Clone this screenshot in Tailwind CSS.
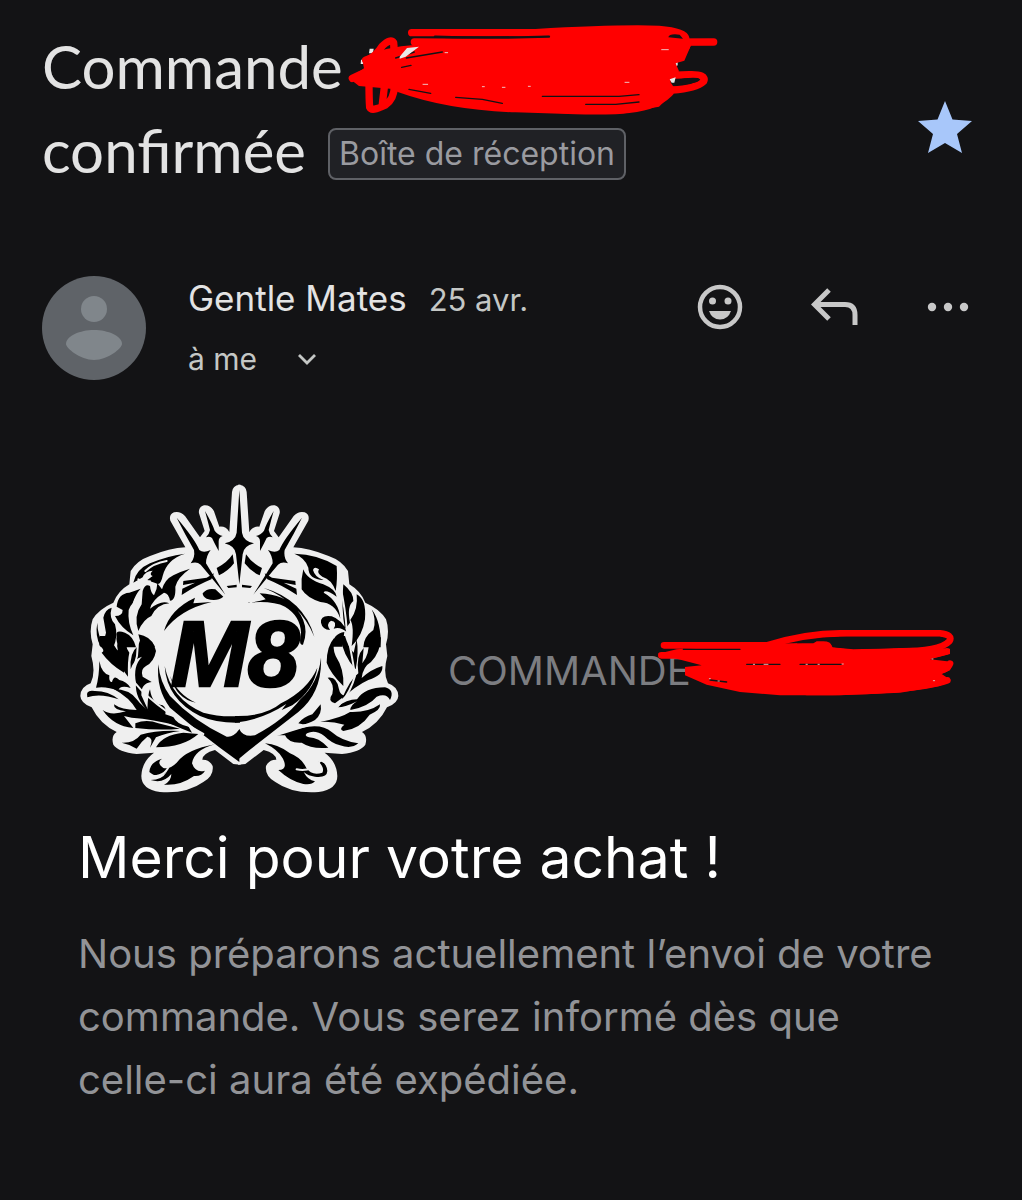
<!DOCTYPE html>
<html lang="fr">
<head>
    <meta charset="UTF-8">
    <meta name="viewport" content="width=device-width, initial-scale=1.0">
    <title>Commande confirmée</title>
    <script src="https://cdn.jsdelivr.net/npm/@tailwindcss/browser@4"></script>
</head>
<body class="min-h-screen bg-[#131315] font-['Inter',sans-serif] text-[#e3e3e3]">
    <!-- Objet du mail -->
    <header class="flex items-center justify-between pl-[42px] pr-[50px] pt-6">
        <h1 class="font-['Lato',sans-serif] text-[60px] leading-[84px]">
            <span class="relative block w-fit">Commande
                <svg class="absolute -top-0.5 left-full ml-1 h-[94px] w-[372px] max-w-none" viewBox="54 36 1116 282" fill="none" stroke="#ff0000" stroke-width="22" stroke-linecap="round" stroke-linejoin="round" aria-hidden="true">
                    <path fill="#e8e8e8" stroke="none" d="M122 116h12l-2 14h-12zM96 150l8-4v16h-9zM1028 154l18-4v16l-8 6z"/>
                    <path fill="#ff0000" stroke="none" d="M60 205L105 175L100 150L180 128L265 106L340 88L500 84L680 74L860 48H990L1076 75L1086 106L1066 152L1040 160L1050 184L1024 216L1040 240L990 290L860 312H740L540 300L380 285L240 246L200 238L90 228Z"/>
                    <path d="M248 68H620Q860 54 990 58Q1066 64 1070 84Q1070 100 1040 92M256 96L520 98L1154 96M1076 100Q1060 150 980 150"/>
                    <path d="M112 152Q140 140 160 108Q184 84 194 98Q200 140 170 170L120 215Q120 270 122 292Q128 306 168 286Q196 268 196 228M160 282L168 215"/>
                    <path d="M70 205Q180 150 330 150M110 150Q180 120 256 116M210 236Q360 290 560 296L740 302Q860 304 900 298Q990 290 1030 240Q1100 236 1124 214Q1134 192 1080 194L1020 196"/>
                    <path stroke="#131315" stroke-width="7" d="M318 80Q470 86 660 80"/>
                    <path stroke="#131315" stroke-width="4" d="M256 126L200 144M232 144L340 126M218 172L246 166M240 238L305 250M380 262L460 268L520 280M640 259H870L930 254M770 283H860L930 276"/>
                    <path fill="#131315" stroke="none" d="M1044 210Q1070 202 1106 204Q1120 208 1104 216Q1074 226 1044 224ZM1018 82Q1020 70 1052 74L1062 86Z"/>
                    <path fill="#e8e8e8" stroke="none" d="M212 140l22-26 36-4-40 30-18 6zM1022 208l18-6-4 16h-8z"/>
                    <path stroke="#f0c0c0" stroke-width="3" d="M348 128h8M282 223h14M460 230h6M520 232h8M598 229h6M888 217h12M998 119h20"/>
                </svg>
            </span>
            <span class="inline-flex items-center gap-[22px]">confirmée
                <button type="button" class="mt-2 rounded-[8px] border-2 border-[#5f6166] bg-[#202125] px-[9px] font-['Inter',sans-serif] text-[32px] leading-[48px] text-[#9a9ba0]">Boîte de réception</button>
            </span>
        </h1>
        <button type="button" class="mt-10" aria-label="Suivi">
            <svg class="h-[54px] w-[54px]" viewBox="0 0 54 54" fill="#a8c7fa" aria-hidden="true">
                <path d="M27 0L34.500 18.500L54 20L39 33L44 52L27 42L10 52L15 33L0 20L19.500 18.500Z"/>
            </svg>
        </button>
    </header>

    <!-- Expéditeur -->
    <section class="flex items-start pl-[42px] pr-[53px] pt-[84px]">
        <svg class="h-[104px] w-[104px] shrink-0" viewBox="0 0 104 104" aria-hidden="true">
            <circle cx="52" cy="52" r="52" fill="#5f6368"/>
            <circle cx="52" cy="33" r="13" fill="#80868b"/>
            <path fill="#80868b" d="M52 54C66 54 80 60 80 68C80 72 66 84 52 84S24 72 24 68C24 60 38 54 52 54Z"/>
        </svg>
        <div class="ml-[42px] flex-1">
            <p class="flex items-baseline gap-[22px] text-[35px] leading-[44px]">Gentle Mates <time class="text-[31px] text-[#c4c7c5]">25 avr.</time></p>
            <button type="button" class="mt-[15px] flex items-center gap-10 text-[30px] leading-[44px] text-[#c4c7c5]">à me
                <svg class="h-5 w-5" viewBox="0 0 20 20" fill="none" stroke="currentColor" stroke-width="2.800" aria-hidden="true"><path d="M2 6L10 14L18 6"/></svg>
            </button>
        </div>
        <div class="flex items-center gap-[68px] pt-2 text-[#c8c8c8]">
            <button type="button" aria-label="Réagir">
                <svg class="h-[46px] w-[46px]" viewBox="0 0 46 46" fill="currentColor" aria-hidden="true">
                    <circle cx="23" cy="23" r="20" fill="none" stroke="currentColor" stroke-width="4.500"/>
                    <circle cx="15.500" cy="17" r="3.500"/><circle cx="31" cy="17" r="3.500"/>
                    <path d="M12 27H34Q31 35.500 23 35.500T12 27Z"/>
                </svg>
            </button>
            <button type="button" aria-label="Répondre">
                <svg class="h-[46px] w-[48px]" viewBox="0 0 48 46" fill="none" stroke="currentColor" stroke-width="5" aria-hidden="true">
                    <path d="M18 6L3.500 20.500L18 35M4 20.500H34Q44 20.500 44 31V41"/>
                </svg>
            </button>
            <button type="button" aria-label="Plus d'options">
                <svg class="h-[46px] w-[42px]" viewBox="0 0 42 46" fill="currentColor" aria-hidden="true">
                    <circle cx="5" cy="23" r="4.200"/><circle cx="21" cy="23" r="4.200"/><circle cx="37" cy="23" r="4.200"/>
                </svg>
            </button>
        </div>
    </section>

    <!-- Contenu -->
    <main class="px-[78px] pt-[100px]">
        <div class="flex items-center gap-12">
            <svg class="h-[316px] w-[322px] shrink-0" viewBox="24 15 966 948" role="img" aria-label="Gentle Mates M8">
                <defs>
                    <path id="half" d="M512 26H508Q488 28 486 48L478 168Q468 150 448 152L432 106Q422 86 402 88Q384 94 387 112L404 165L390 184L345 120Q330 104 312 109Q296 116 301 134L346 214Q300 216 240 240Q200 254 182 285L178 325Q144 345 130 380Q85 400 68 430Q56 465 68 505L64 540Q78 590 62 622Q32 632 31 660Q32 682 65 694Q90 745 140 768Q122 780 130 806Q145 828 200 834L252 830Q216 856 214 900Q214 940 270 948Q350 954 400 918Q432 900 428 870Q418 850 397 851Q398 832 435 822L490 864L512 866Z"/>
                    <g id="stars">
                        <path d="M320 125Q375 190 388 222Q400 232 422 222Q408 240 408 262Q440 315 466 356Q425 305 392 266Q380 255 362 262Q376 245 372 222Q345 175 320 125Z"/>
                        <path d="M405 105Q428 145 434 164Q442 176 458 180Q446 184 446 196L446 225Q435 205 426 186Q418 180 408 184Q418 174 420 162Q412 130 405 105Z"/>
                        <path d="M440 276Q472 260 488 235L492 262Q475 285 447 298ZM340 315L410 305L432 292L424 310Q380 328 335 357L337 338L375 320L339 327ZM470 330L500 326V334L475 336Z"/>
                    </g>
                </defs>
                <g fill="#efefef">
                    <use href="#half"/>
                    <use href="#half" transform="translate(1016 0) scale(-1 1)"/>
                </g>
                <g fill="#000000">
                    <use href="#stars"/>
                    <use href="#stars" transform="translate(1016 0) scale(-1 1)"/>
                    <path d="M508 42L516 170Q520 195 552 202Q520 210 518 235L508 325L498 235Q496 210 464 202Q496 195 500 170Z"/>
                    <!-- laurier, haut gauche -->
                    <path d="M398 352Q412 335 436 340L460 362Q440 378 410 368Q398 362 398 352ZM282 465Q300 400 375 365L370 382L425 378Q330 400 282 465Z"/>
                    <path d="M190 320Q198 280 240 262Q290 240 345 233Q290 250 278 300Q272 330 258 322Q245 318 232 312L248 300Q236 296 248 284Q226 284 218 304Z"/>
                    <path d="M218 345Q225 322 240 330Q242 350 252 358Q262 340 262 322Q270 332 276 340Q285 310 310 298Q335 285 360 278Q322 305 316 332Q318 372 300 374Q296 352 282 350Q246 372 240 398Q275 370 298 382Q262 384 244 420Q220 430 205 465Q190 420 215 385Z"/>
                    <path d="M140 392Q144 352 178 350L212 338Q196 355 188 382Q180 390 176 402Q172 440 190 478Q152 455 135 420Q158 420 158 402Z"/>
                    <path d="M100 425Q105 400 125 395Q116 425 135 445Q145 480 130 514H108Q98 500 108 470ZM82 440Q82 480 105 512H92Q74 480 82 440ZM140 480Q135 460 165 470Q190 480 198 514H152Q136 500 140 480ZM205 475Q240 480 255 512H215Z"/>
                    <!-- laurier, bas gauche -->
                    <g transform="translate(0 480)">
                        <path d="M90 0H126Q126 30 150 50Q165 70 162 110Q120 85 95 50Q108 45 88 28ZM148 0H172Q162 30 178 50Q172 75 174 122Q150 95 150 60Q134 30 148 0Z"/>
                        <path d="M215 0Q254 15 258 45Q252 78 228 90Q210 100 218 122L245 138Q212 142 214 178L236 226Q194 188 198 140Q188 90 216 62Q192 68 182 100Q178 50 204 30Z"/>
                        <path d="M88 75Q95 112 118 118Q116 140 126 138Q132 114 148 132Q170 136 182 156Q148 146 145 165Q110 150 78 155Q88 120 88 75ZM52 184Q45 160 75 165Q115 165 146 190Q90 170 52 184Z"/>
                        <path d="M130 158Q180 160 200 190Q230 230 318 268Q250 250 185 245L162 240L190 276Q130 270 98 222Q122 240 168 226Q130 222 132 205Q155 222 200 222Q180 185 130 158Z"/>
                        <path d="M196 262Q230 248 265 262L330 278Q270 284 196 276ZM155 320Q192 322 212 296Q260 282 330 285Q290 290 258 304L240 335Q252 304 232 302Q212 318 200 338Q180 325 155 320ZM258 334Q278 296 340 290L385 294Q340 334 258 334Z"/>
                        <path d="M232 222Q234 170 240 160Q246 205 278 208Q290 215 286 235L310 243Q320 265 356 272L366 290Q260 250 232 222Z"/>
                        <path d="M265 85Q258 160 300 215Q400 300 500 372L508 378V280Q490 305 470 302Q370 255 300 180Q270 140 265 85ZM284 90Q304 190 400 230Q450 244 510 240V260Q440 262 390 240Q290 190 284 90ZM300 120Q325 178 378 200Q320 190 300 120Z"/>
                        <path d="M276 368Q258 380 280 396Q300 400 320 380Q350 340 435 325Q372 342 366 382Q376 412 405 404Q395 422 372 420Q330 450 282 446Q304 436 304 414Q280 444 242 432Q276 432 290 408Q262 430 238 408Q240 378 276 368Z"/>
                    </g>
                    <!-- laurier, haut droite -->
                    <g transform="translate(495 0)">
                        <path d="M30 381Q70 378 92 370L74 352Q150 355 185 400Q226 450 204 506Q190 510 198 470Q196 420 150 392Q110 372 30 381ZM85 335Q206 370 238 482Q195 378 85 335Z"/>
                        <path d="M178 233Q250 235 305 270Q308 310 302 345Q290 310 262 302Q244 292 252 280Q238 270 234 282Q240 305 266 312Q220 310 220 275Q210 245 178 233ZM205 280Q215 310 265 325Q302 340 305 362Q270 338 266 350Q312 375 316 428Q300 380 256 378Q215 365 200 340Q197 310 205 280Z"/>
                        <path d="M325 325Q356 350 355 375Q335 390 345 440L330 460Q318 400 325 325ZM365 355Q395 370 390 430Q382 480 350 510Q358 450 346 432Q370 400 365 355ZM258 440Q256 416 290 421Q320 430 338 470Q316 450 296 458Q308 436 288 434Q272 444 285 462Q262 460 258 440ZM410 400Q440 440 437 514H385Q386 482 415 462Q425 430 410 400ZM290 512Q295 472 328 468L322 512Z"/>
                    </g>
                    <!-- laurier, bas droite -->
                    <g transform="translate(495 480)">
                        <path d="M258 65Q262 170 190 228Q110 290 40 345L12 368V278Q25 305 60 298Q150 250 196 190Q250 140 258 65ZM0 240Q90 242 138 202Q220 160 247 95Q238 160 172 208L140 222L154 204Q80 252 0 260Z"/>
                        <path d="M298 5Q292 40 302 60Q328 100 325 150Q285 110 275 80Q275 30 298 5ZM316 0H330Q340 35 356 50L365 10Q372 50 362 100Q324 60 316 0Z"/>
                        <path d="M402 10L438 4Q436 50 408 78Q384 92 380 126Q408 100 442 90Q446 118 400 132Q360 150 320 190Q346 130 370 112Q362 60 386 36L382 82Q404 56 402 10ZM278 125Q306 120 312 160Q316 180 332 178L300 202Q276 195 292 174Q300 145 278 125Z"/>
                        <path d="M305 214Q335 190 366 190Q390 154 450 154Q480 162 465 192Q455 170 425 182Q400 212 346 222Q346 208 366 196Q330 215 305 214ZM255 258Q320 245 345 228Q400 230 435 205Q438 222 404 236Q376 278 325 285Q310 280 328 266Q290 255 255 258ZM257 205Q262 235 240 252Q210 270 190 262Q206 242 232 235Z"/>
                        <path d="M120 298Q160 285 200 276Q260 262 290 288Q320 315 370 322Q350 340 315 328Q290 322 268 300Q240 280 216 292Q206 300 222 304Q250 304 280 335Q230 340 200 320Q160 322 150 298Z"/>
                        <path d="M90 322Q130 325 165 352Q200 366 214 396Q230 420 262 410Q270 396 250 376Q274 376 277 405Q276 426 240 422Q220 420 206 408Q218 432 240 436Q230 448 205 444Q165 435 130 402Q160 402 144 368Q130 342 90 322Z"/>
                    </g>
                </g>
                <g fill="none" stroke="#efefef" stroke-width="6" stroke-linecap="round">
                    <path d="M212 345Q160 420 200 480Q212 540 180 600Q230 680 400 774M205 310Q222 320 240 316M290 255Q250 262 226 285"/>
                    <path d="M811 330Q826 400 830 460Q850 560 855 600Q830 690 740 740L610 780M750 855Q720 890 680 880M300 860Q290 900 250 900"/>
                </g>
                <text x="302" y="631" font-family="'Liberation Sans', sans-serif" font-weight="700" font-style="italic" font-size="278" fill="#000000" stroke="#000000" stroke-width="8">M8</text>
            </svg>
            <p class="relative mt-16 text-[40px] leading-[48px] text-[#7c7d81]">COMMANDE
                <svg class="absolute -top-5 left-[208px] h-[70px] w-[300px] max-w-none" viewBox="48 45 900 210" fill="none" stroke="#ff0000" stroke-width="20" stroke-linecap="round" stroke-linejoin="round" aria-hidden="true">
                    <path fill="#ff0000" stroke="none" d="M54 125L110 112L300 100L400 95L520 92L530 86H568L578 106L640 112L780 108L930 110V126L870 142L940 150L930 175L905 186L932 204L900 222L780 242L600 250H420L300 240L200 218L135 190V165L185 160L110 140Z"/>
                    <path d="M72 100H380Q500 64 600 64H900Q940 68 928 88Q900 118 780 118M64 130H300M920 118Q860 136 780 138M930 155Q920 182 860 178M922 205Q820 240 500 240"/>
                    <path stroke="#131315" stroke-width="4" d="M130 112H300M320 157H420M480 157H604M210 204L260 210"/>
                    <path fill="#131315" stroke="none" d="M470 94Q520 76 620 74H900Q918 78 900 88Q860 106 760 108Q640 114 578 104Q572 88 550 88H530L520 94Z"/>
                    <path stroke="#e0b0b0" stroke-width="3" d="M340 157h4M372 157h12M498 157h4M534 157h4M606 156h4M208 200h3M234 207h4M876 141h3M880 206h4"/>
                </svg>
            </p>
        </div>
        <h2 class="mt-[26px] text-[57px] leading-[70px] text-white">Merci pour votre achat !</h2>
        <p class="mt-[29px] text-[40px] leading-[63px] text-[#929397]">Nous préparons actuellement l’envoi de votre commande. Vous serez informé dès que celle-ci aura été expédiée.</p>
    </main>
</body>
</html>
